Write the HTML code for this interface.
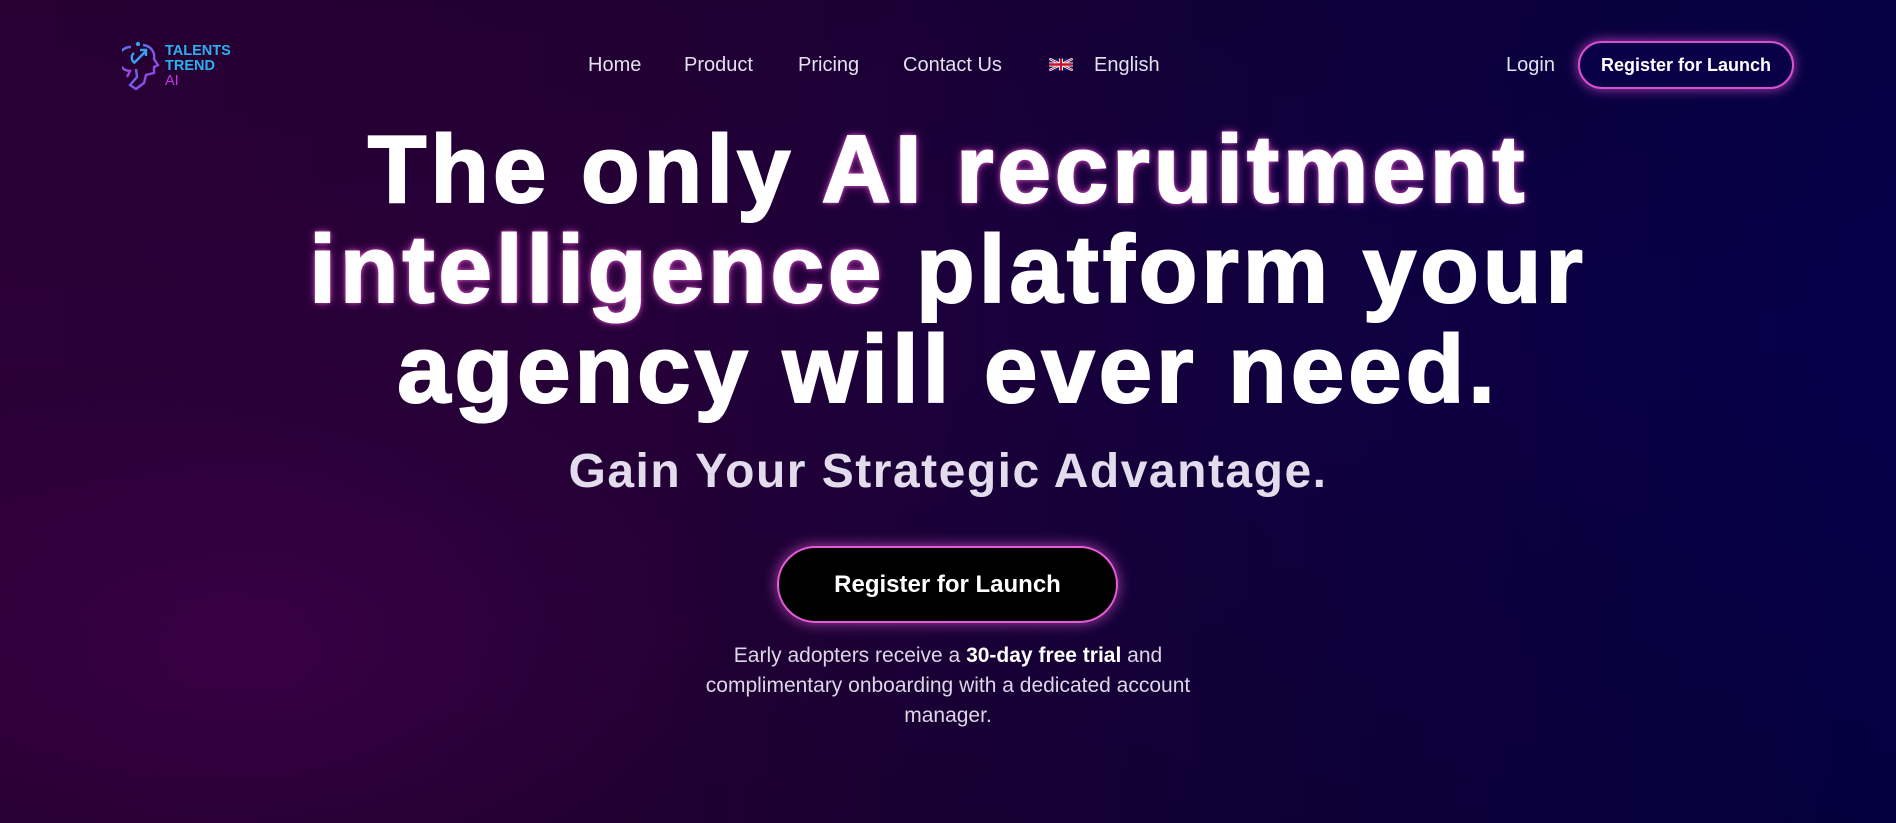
<!DOCTYPE html>
<html><head><meta charset="utf-8"><style>
*{margin:0;padding:0;box-sizing:border-box}
html,body{width:1896px;height:823px;overflow:hidden}
body{font-family:"Liberation Sans",sans-serif;color:#fff;position:relative;
background:linear-gradient(90deg,#2c0038 0%,#250038 35%,#12003e 65%,#04004a 100%);}
.bg2{position:absolute;inset:0;background:radial-gradient(ellipse 700px 400px at 250px 650px,rgba(80,0,90,.45),transparent 70%),linear-gradient(180deg,rgba(0,0,0,.1),rgba(0,0,0,0) 40%,rgba(0,0,0,.15));}
.abs{position:absolute}
.nav a{position:absolute;top:54px;font-size:20px;color:#e4e0ee;white-space:nowrap}
h1{position:absolute;left:0;width:1896px;top:120px;text-align:center;font-size:96px;line-height:100px;font-weight:bold;letter-spacing:4px;-webkit-text-stroke:2px #fff}
.g{text-shadow:0 0 4px #ff7ae6,0 0 10px rgba(220,60,200,.8)}
.sub{position:absolute;left:0;width:1896px;top:444px;text-align:center;font-size:48px;font-weight:bold;color:#e2dcec;letter-spacing:1.5px}
.btn{position:absolute;left:777px;top:546px;width:341px;height:77px;border-radius:40px;background:#000;border:2px solid #e85bd6;box-shadow:0 0 14px rgba(230,90,214,.7);font-size:24px;font-weight:bold;text-align:center;line-height:73px}
.note{position:absolute;left:683px;width:530px;top:641px;text-align:center;font-size:21px;line-height:30px;color:#ddd6e6}
.rb{position:absolute;left:1578px;top:41px;width:216px;height:48px;border-radius:26px;background:#0a0048;border:2px solid #d94fd0;box-shadow:0 0 12px rgba(217,79,208,.8);font-size:18px;font-weight:bold;text-align:center;line-height:44px}
</style></head><body>
<div class="bg2"></div>
<svg class="abs" style="left:122px;top:41px" width="42" height="50" viewBox="0 0 42 50">
<defs><linearGradient id="lg" x1="0" y1="0" x2="1" y2="1"><stop offset="0" stop-color="#3a8cf0"/><stop offset="1" stop-color="#b033e0"/></linearGradient></defs>
<circle cx="16" cy="3" r="2.2" fill="#3aa0f0"/>
<path d="M9 6 A12 12 0 0 0 8 30 L5 36" fill="none" stroke="url(#lg)" stroke-width="2.4"/>
<path d="M13 22 A6 6 0 0 1 12 12" fill="none" stroke="#3aa0f0" stroke-width="2.4"/>
<path d="M12 22 L24 10 M18 9 L24 9 L24 15" fill="none" stroke="#3aa0f0" stroke-width="2.4"/>
<path d="M21 4 C30 5 33 12 32 18 L36 24 L32 26 L32 32 L24 34 L22 42 L14 48 L8 44 L15 36 L14 28" fill="none" stroke="url(#lg)" stroke-width="2.4"/>
</svg>
<div class="abs" style="left:165px;top:44px;font-size:14.5px;line-height:15px;font-weight:bold;color:#2cb0ef">TALENTS<br>TREND<br><span style="color:#c03ae6;font-weight:normal">AI</span></div>
<div class="nav">
<a style="left:588px">Home</a><a style="left:684px">Product</a><a style="left:798px">Pricing</a><a style="left:903px">Contact Us</a>
<svg class="abs" style="left:1049px;top:58px" width="24" height="13" viewBox="0 0 60 30"><rect width="60" height="30" fill="#012169"/><path d="M0 0L60 30M60 0L0 30" stroke="#fff" stroke-width="6"/><path d="M0 0L60 30M60 0L0 30" stroke="#C8102E" stroke-width="2"/><path d="M30 0V30M0 15H60" stroke="#fff" stroke-width="10"/><path d="M30 0V30M0 15H60" stroke="#C8102E" stroke-width="6"/></svg>
<a style="left:1094px">English</a>
<a style="left:1506px">Login</a>
</div>
<div class="rb">Register for Launch</div>
<h1>The only <span class="g">AI recruitment</span><br><span class="g">intelligence</span> platform your<br>agency will ever need.</h1>
<div class="sub">Gain Your Strategic Advantage.</div>
<div class="btn">Register for Launch</div>
<div class="note">Early adopters receive a <b style="color:#fff">30-day free trial</b> and complimentary onboarding with a dedicated account manager.</div>
</body></html>
